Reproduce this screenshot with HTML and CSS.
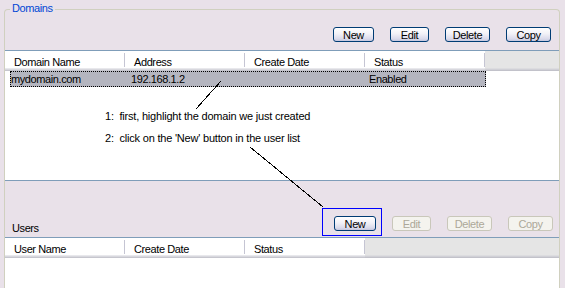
FILE: index.html
```html
<!DOCTYPE html>
<html>

<head>
    <link rel="stylesheet" href="styles.css">
</head>

<body>
    <div class="group">
        <span class="legend">Domains</span>
        <div class="toolbar top_bar">
            <button class="btn w_new">New</button>
            <button class="btn w_edit">Edit</button>
            <button class="btn w_wide">Delete</button>
            <button class="btn w_wide">Copy</button>
        </div>
        <div class="grid domain_grid">
            <div class="head">
                <div class="col">Domain Name</div>
                <div class="col">Address</div>
                <div class="col">Create Date</div>
                <div class="col">Status</div>
                <div class="fill"></div>
            </div>
            <div class="row selected">
                <div class="cell">mydomain.com</div>
                <div class="cell">192.168.1.2</div>
                <div class="cell"></div>
                <div class="cell">Enabled</div>
            </div>
            <div class="notes">
                <p class="note">1:  first, highlight the domain we just created</p>
                <p class="note">2:  click on the 'New' button in the user list</p>
            </div>
        </div>
        <div class="toolbar user_bar">
            <span class="label">Users</span>
            <span class="mark">
                <button class="btn w_new2">New</button>
            </span>
            <button class="btn w_edit" disabled>Edit</button>
            <button class="btn w_wide" disabled>Delete</button>
            <button class="btn w_wide" disabled>Copy</button>
        </div>
        <div class="grid user_grid">
            <div class="head">
                <div class="col">User Name</div>
                <div class="col">Create Date</div>
                <div class="col">Status</div>
                <div class="fill"></div>
            </div>
        </div>
    </div>
    <!-- callout lines -->
    <svg class="callouts" width="565" height="288" viewBox="0 0 565 288">
        <line x1="221" y1="81" x2="196" y2="109" />
        <line x1="250" y1="147" x2="323" y2="207" />
    </svg>
</body>

</html>
```

FILE: styles.css
```css
html,
body {
    margin: 0;
    height: 288px;
    overflow: hidden;
}

body {
    background-color: #e9e1e9;
    font-family: "Liberation Sans", Arial, sans-serif;
    font-size: 11px;
    letter-spacing: -0.4px;
    color: #000;
    position: relative;
}

.group {
    position: relative;
    margin: 9px 0 0 4px;
    width: 554px;
    height: 278px;
    border: 1px solid #d0d0bf;
    border-bottom: none;
    border-radius: 4px 4px 0 0;
}

.legend {
    position: absolute;
    top: -8px;
    left: 5px;
    padding: 0 2px;
    line-height: 13px;
    color: #0046d5;
    background-color: #e9e1e9;
}

.toolbar {
    display: flex;
    justify-content: flex-end;
    align-items: flex-end;
    gap: 16px;
}

.top_bar {
    padding: 17px 8px 8px 0;
}

.user_bar {
    box-sizing: border-box;
    height: 56px;
    padding: 0 6px 2px 7px;
}

.label {
    margin-right: auto;
    line-height: 13px;
}

.btn {
    box-sizing: border-box;
    height: 15px;
    padding: 0;
    border: 1px solid #003c74;
    border-radius: 3px;
    background: linear-gradient(#ffffff, #f2f1f7 45%, #d9d9ea 85%, #c4c6de);
    font-family: "Liberation Sans", Arial, sans-serif;
    font-size: 11px;
    letter-spacing: -0.4px;
    line-height: 12px;
    color: #000;
}

.user_bar .btn {
    margin-bottom: 4px;
}

.btn:disabled {
    border-color: #c9c7ba;
    background: #f4f3ee;
    color: #aca899;
}

.w_new {
    width: 41px;
}

.w_new2 {
    width: 42px;
}

.w_edit {
    width: 39px;
}

.w_wide {
    width: 45px;
}

.mark {
    position: relative;
    display: flex;
}

.mark::after {
    content: "";
    position: absolute;
    left: -12px;
    top: -8px;
    right: -6px;
    bottom: -1px;
    border: 1px solid #0000ff;
}

.grid {
    background-color: #fff;
    border-top: 1px solid #7f9db9;
}

.domain_grid {
    height: 129px;
    border-bottom: 1px solid #7f9db9;
}

.user_grid {
    height: 50px;
}

.head {
    display: flex;
    height: 20px;
    background: linear-gradient(#fff 17px, #e8e8ec 17px, #e8e8ec 18px, #d8d8de 18px, #d8d8de 19px, #c6c6ce 19px);
}

.col {
    position: relative;
    box-sizing: border-box;
    width: 120px;
    padding: 3px 0 0 9px;
    line-height: 16px;
}

.col::after {
    content: "";
    position: absolute;
    right: 0;
    top: 2px;
    width: 1px;
    height: 14px;
    background-color: #c5c5d3;
}

.fill {
    flex: 1;
    background: linear-gradient(#e5e5e5 17px, #dcdcdf 17px, #dcdcdf 18px, #d0d0d6 18px, #d0d0d6 19px, #c2c2ca 19px);
}

.row {
    display: flex;
    height: 16px;
    line-height: 16px;
}

.selected {
    margin-left: 5px;
    width: 476px;
    background-color: #b4b5bf;
    outline: 1px dotted #000;
    outline-offset: -1px;
}

.cell {
    box-sizing: border-box;
    width: 120px;
    padding-left: 1px;
}

.cell + .cell {
    padding-left: 2px;
}

.notes {
    margin-top: 18px;
    padding-left: 100px;
}

.note {
    margin: 0;
    line-height: 22px;
    letter-spacing: -0.2px;
    white-space: pre;
}

.callouts {
    position: absolute;
    left: 0;
    top: 0;
    pointer-events: none;
}

.callouts line {
    stroke: #000;
    stroke-width: 1;
    shape-rendering: crispEdges;
}
```
